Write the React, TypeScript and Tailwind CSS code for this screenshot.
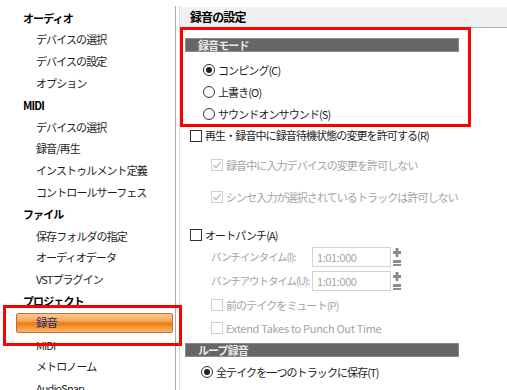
import React from "react";

const FONT = { fontFamily: '"Noto Sans CJK JP", "Noto Sans", sans-serif' };

function Radio({ checked }: { checked?: boolean }) {
  return (
    <span className="w-[12px] h-[12px] rounded-full border border-[#333] bg-white flex items-center justify-center shrink-0">
      {checked && <span className="w-[6px] h-[6px] rounded-full bg-[#222]" />}
    </span>
  );
}

function Check({ disabled, checked }: { disabled?: boolean; checked?: boolean }) {
  return (
    <span
      className={
        "w-[12px] h-[12px] border bg-white flex items-center justify-center shrink-0 " +
        (disabled ? "border-[#cfcfcf]" : "border-[#333]")
      }
    >
      {checked && (
        <svg width="10" height="10" viewBox="0 0 10 10">
          <path d="M1.5 5.2 L4 7.6 L8.6 2.2" fill="none" stroke="#b4b4b4" strokeWidth="1.3" />
        </svg>
      )}
    </span>
  );
}

function Spinner() {
  return (
    <div className="flex flex-col items-center justify-between h-[19px] ml-[2px] w-[8px] shrink-0">
      <svg width="8" height="9" viewBox="0 0 8 9">
        <rect x="0" y="3" width="8" height="3" fill="#8c8c8c" />
        <rect x="2.5" y="0" width="3" height="9" fill="#8c8c8c" />
      </svg>
      <svg width="8" height="9" viewBox="0 0 8 9">
        <rect x="0" y="2" width="8" height="3" fill="#8c8c8c" />
        <rect x="0" y="6" width="8" height="2" fill="#8c8c8c" />
      </svg>
    </div>
  );
}

const leftItems: { t: string; bold?: boolean; sel?: boolean }[] = [
  { t: "オーディオ", bold: true },
  { t: "デバイスの選択" },
  { t: "デバイスの設定" },
  { t: "オプション" },
  { t: "MIDI", bold: true },
  { t: "デバイスの選択" },
  { t: "録音/再生" },
  { t: "インストゥルメント定義" },
  { t: "コントロールサーフェス" },
  { t: "ファイル", bold: true },
  { t: "保存フォルダの指定" },
  { t: "オーディオデータ" },
  { t: "VSTプラグイン" },
  { t: "プロジェクト", bold: true },
  { t: "録音", sel: true },
  { t: "MIDI" },
  { t: "メトロノーム" },
  { t: "AudioSnap" },
];

export default function App() {
  return (
    <div
      className="relative w-[507px] h-[390px] overflow-hidden bg-white flex text-[11px] text-[#1e1e1e] tracking-[-0.9px]"
      style={FONT}
    >
      {/* left tree */}
      <div className="w-[175px] shrink-0 flex flex-col pt-[7px]">
        {leftItems.map((it, i) =>
          it.sel ? (
            <div key={i} className="h-[21.8px] shrink-0 flex items-center">
              <div className="ml-[16px] w-[157px] h-[20px] flex items-center pl-[19px] border border-[#b8743a] rounded-[2px] bg-[linear-gradient(to_bottom,#fbc995_0%,#f8a552_40%,#ee7a12_52%,#f49a3c_75%,#fbb56a_100%)] text-[#1c2a78] text-[11.5px]">
                {it.t}
              </div>
            </div>
          ) : (
            <div
              key={i}
              className={
                "h-[21.8px] shrink-0 flex items-center whitespace-nowrap " +
                (it.bold ? "pl-[23px] font-bold text-black" : "pl-[36px]")
              }
            >
              {it.t}
            </div>
          )
        )}
      </div>

      {/* separator */}
      <div className="mt-[6px] w-[1px] shrink-0 bg-[#a8a8a8]" />
      <div className="w-[3px] shrink-0" />
      <div className="mt-[6px] w-[1px] shrink-0 bg-[#dcdcdc]" />

      {/* right panel */}
      <div className="flex-1 flex flex-col pt-[7px]">
        <div className="h-[21px] shrink-0 bg-[#f0f0f0] border-b border-[#a9a9a9] flex items-center pl-[10px] font-bold text-[12px] text-black">
          録音の設定
        </div>
        <div className="pl-[5px] w-[279px] flex flex-col [&>*]:shrink-0">
          <div className="mt-[10px] h-[14px] bg-[#666] border border-[#8a8a8a] text-[#e8e8e8] font-bold flex items-center pl-[12px] text-[11px]">
            録音モード
          </div>
          <div className="mt-[7px] h-[22px] flex items-center pl-[18px] gap-[3px]">
            <Radio checked />
            <span>コンピング(C)</span>
          </div>
          <div className="h-[22px] flex items-center pl-[18px] gap-[3px]">
            <Radio />
            <span>上書き(O)</span>
          </div>
          <div className="h-[22px] flex items-center pl-[18px] gap-[3px]">
            <Radio />
            <span>サウンドオンサウンド(S)</span>
          </div>
          <div className="h-[21px] flex items-center pl-[5px] gap-[3px] whitespace-nowrap">
            <Check />
            <span>再生・録音中に録音待機状態の変更を許可する(R)</span>
          </div>
          <div className="mt-[8px] h-[22px] flex items-center pl-[26px] gap-[3px] text-[#a4a4a4] whitespace-nowrap">
            <Check disabled checked />
            <span>録音中に入力デバイスの変更を許可しない</span>
          </div>
          <div className="mt-[10px] h-[22px] flex items-center pl-[26px] gap-[3px] text-[#a4a4a4] whitespace-nowrap">
            <Check disabled checked />
            <span>シンセ入力が選択されているトラックは許可しない</span>
          </div>
          <div className="mt-[16px] h-[22px] flex items-center pl-[5px] gap-[3px]">
            <Check />
            <span>オートパンチ(A)</span>
          </div>
          <div className="mt-[1px] h-[20px] flex items-center pl-[26px] text-[#a4a4a4] whitespace-nowrap">
            <span className="w-[101px] shrink-0 text-[10.5px] tracking-[-1.1px]">パンチインタイム(I):</span>
            <div className="w-[79px] h-[20px] shrink-0 border border-[#d2d2d2] flex items-center pl-[4px] tracking-[-0.4px]">
              1:01:000
            </div>
            <Spinner />
          </div>
          <div className="mt-[4px] h-[20px] flex items-center pl-[26px] text-[#a4a4a4] whitespace-nowrap">
            <span className="w-[101px] shrink-0 text-[10.5px] tracking-[-1.1px]">パンチアウトタイム(U):</span>
            <div className="w-[79px] h-[20px] shrink-0 border border-[#d2d2d2] flex items-center pl-[4px] tracking-[-0.4px]">
              1:01:000
            </div>
            <Spinner />
          </div>
          <div className="mt-[3px] h-[22px] flex items-center pl-[26px] gap-[3px] text-[#a4a4a4]">
            <Check disabled />
            <span>前のテイクをミュート(P)</span>
          </div>
          <div className="mt-[1px] h-[22px] flex items-center pl-[26px] gap-[3px] text-[#a4a4a4] whitespace-nowrap">
            <Check disabled />
            <span className="tracking-[-0.3px]">Extend Takes to Punch Out Time</span>
          </div>
          <div className="mt-[4px] h-[14px] bg-[#666] border border-[#8a8a8a] text-[#e8e8e8] font-bold flex items-center pl-[12px]">
            ループ録音
          </div>
          <div className="mt-[4px] h-[22px] flex items-center pl-[16px] gap-[3px] whitespace-nowrap">
            <Radio checked />
            <span>全テイクを一つのトラックに保存(T)</span>
          </div>
        </div>
      </div>

      {/* red annotation boxes */}
      <div className="absolute left-[180px] top-[27px] w-[291px] h-[100px] border-[3px] border-[#ff0000] pointer-events-none" />
      <div className="absolute left-[3px] top-[305px] w-[179px] h-[41px] border-[3px] border-[#ff0000] pointer-events-none" />
    </div>
  );
}
